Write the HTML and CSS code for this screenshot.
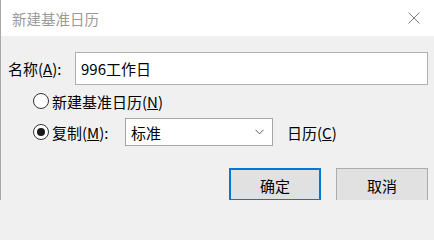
FILE: index.html
```html
<!DOCTYPE html>
<html lang="zh">
<head>
<meta charset="utf-8">
<title>新建基准日历</title>
<link rel="stylesheet" href="styles.css">
</head>
<body>
<div class="dialog">
  <div class="titlebar">
    <span class="title">新建基准日历</span>
    <svg class="close" width="12" height="12" viewBox="0 0 12 12"><path d="M0.5 0.5 L11.5 11.5 M11.5 0.5 L0.5 11.5" stroke="#808080" stroke-width="1" fill="none"/></svg>
  </div>
  <div class="content">
    <div class="name-row">
      <span class="name-label">名称(<u>A</u>):</span>
      <div class="textbox">996工作日</div>
    </div>
    <div class="radio-row first">
      <span class="radio"></span>
      <span class="radio-label">新建基准日历(<u>N</u>)</span>
    </div>
    <div class="radio-row second">
      <span class="radio checked"><span class="dot"></span></span>
      <span class="radio-label copy">复制(<u>M</u>):</span>
      <div class="combo">
        <span>标准</span>
        <svg class="chev" width="9" height="6" viewBox="0 0 9 6"><path d="M0.5 0.8 L4.5 4.8 L8.5 0.8" stroke="#555" stroke-width="1" fill="none"/></svg>
      </div>
      <span class="cal-label">日历(<u>C</u>)</span>
    </div>
    <div class="buttons">
      <div class="btn default">确定</div>
      <div class="btn">取消</div>
    </div>
  </div>
</div>
</body>
</html>
```
FILE: styles.css
```css
html, body {
  margin: 0;
  padding: 0;
}
body {
  width: 434px;
  height: 200px;
  overflow: hidden;
  background: #f0f0f0;
  font-family: "Noto Sans CJK SC", "Microsoft YaHei", sans-serif;
  font-size: 15px;
  color: #000;
}
u {
  text-underline-offset: 1px;
}
.dialog {
  height: 200px;
  border-left: 1px solid #a8a8a8;
  box-sizing: border-box;
}
.titlebar {
  height: 36px;
  background: #fff;
  display: flex;
  align-items: center;
  justify-content: space-between;
  padding: 0 14px 0 11px;
}
.title {
  color: #9a9a9a;
  font-size: 14.5px;
  line-height: 1;
  margin-top: 2px;
}
.close {
  display: block;
}
.content {
  padding: 16px 6px 0 7px;
}
.name-row {
  display: flex;
  align-items: center;
  height: 33px;
}
.name-label {
  width: 67px;
  line-height: 1;
}
.textbox {
  width: 353px;
  height: 33px;
  box-sizing: border-box;
  border: 1px solid #b0b0b0;
  background: #fff;
  display: flex;
  align-items: center;
  padding-left: 5px;
  font-size: 15px;
}
.radio-row {
  display: flex;
  align-items: center;
}
.radio-row.first {
  height: 22px;
  margin-top: 5px;
}
.radio-row.second {
  height: 28px;
  margin-top: 6px;
}
.radio {
  width: 16px;
  height: 16px;
  box-sizing: border-box;
  border: 1px solid #333;
  border-radius: 50%;
  background: #fff;
  margin-left: 25px;
  display: flex;
  align-items: center;
  justify-content: center;
}
.radio .dot {
  width: 8px;
  height: 8px;
  border-radius: 50%;
  background: #1a1a1a;
}
.radio-label {
  margin-left: 3px;
  line-height: 1;
}
.radio-label.copy {
  width: 73px;
}
.combo {
  width: 148px;
  height: 28px;
  box-sizing: border-box;
  border: 1px solid #a6a6a6;
  background: #fff;
  display: flex;
  align-items: center;
  justify-content: space-between;
  padding: 0 8px 0 5px;
}
.chev {
  display: block;
}
.cal-label {
  margin-left: 14px;
  line-height: 1;
}
.buttons {
  display: flex;
  justify-content: flex-end;
  gap: 15px;
  margin-top: 22px;
}
.btn {
  width: 92px;
  height: 33px;
  box-sizing: border-box;
  border: 1px solid #adadad;
  background: #e1e1e1;
  display: flex;
  align-items: center;
  justify-content: center;
  padding-top: 1px;
}
.btn.default {
  border: 2px solid #0078d7;
}
```
